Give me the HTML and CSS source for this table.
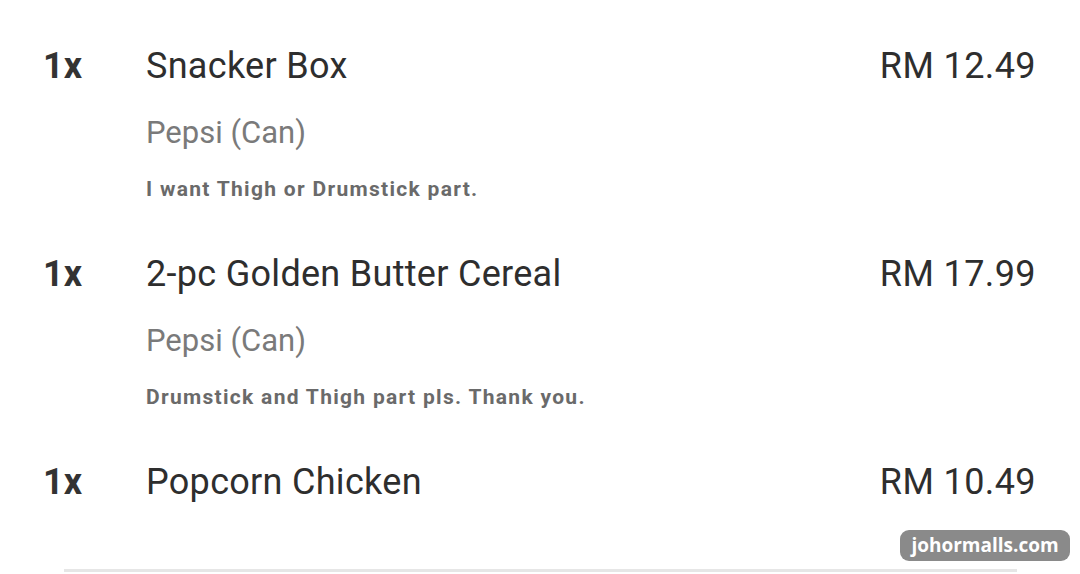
FILE: index.html
```html
<!DOCTYPE html>
<html>
<head>
<meta charset="utf-8">
<link rel="stylesheet" href="styles.css">
</head>
<body>
<div class="order">
  <div class="items">
    <div class="item">
      <div class="qty">1x</div>
      <div class="details">
        <div class="title">Snacker Box</div>
        <div class="option">Pepsi (Can)</div>
        <div class="note">I want Thigh or Drumstick part.</div>
      </div>
      <div class="price">RM 12.49</div>
    </div>
    <div class="item">
      <div class="qty">1x</div>
      <div class="details">
        <div class="title">2-pc Golden Butter Cereal</div>
        <div class="option">Pepsi (Can)</div>
        <div class="note">Drumstick and Thigh part pls. Thank you.</div>
      </div>
      <div class="price">RM 17.99</div>
    </div>
    <div class="item">
      <div class="qty">1x</div>
      <div class="details">
        <div class="title">Popcorn Chicken</div>
      </div>
      <div class="price">RM 10.49</div>
    </div>
  </div>
  <div class="divider"></div>
</div>
<div class="watermark">johormalls.com</div>
</body>
</html>
```
FILE: styles.css
```css
html, body {
  margin: 0;
  padding: 0;
  background: #ffffff;
}
body {
  width: 1080px;
  height: 574px;
  overflow: hidden;
  font-family: Roboto, "Liberation Sans", sans-serif;
  position: relative;
}
.order {
  padding: 44px 44px 0 43px;
  display: flex;
  flex-direction: column;
}
.items {
  display: flex;
  flex-direction: column;
  gap: 51px;
}
.item {
  display: flex;
  align-items: flex-start;
}
.qty {
  width: 103px;
  flex: none;
  font-size: 36px;
  line-height: 44px;
  font-weight: 700;
  color: #333333;
}
.details {
  flex: 1;
  display: flex;
  flex-direction: column;
}
.title {
  font-size: 36px;
  line-height: 44px;
  letter-spacing: 0.3px;
  color: #2e2e2e;
}
.option {
  margin-top: 27px;
  font-size: 31px;
  line-height: 36px;
  color: #7a7a7a;
}
.note {
  margin-top: 26px;
  font-size: 21px;
  line-height: 24px;
  letter-spacing: 1.3px;
  font-weight: 700;
  color: #6a6a6a;
}
.price {
  font-size: 36px;
  line-height: 44px;
  letter-spacing: 0.4px;
  color: #2e2e2e;
}
.divider {
  margin: 65px 19px 0 21px;
  height: 3px;
  background: #e6e6e6;
}
.watermark {
  position: absolute;
  left: 900px;
  top: 530px;
  width: 170px;
  height: 31px;
  border-radius: 9px;
  background: #8a8a8a;
  color: #ffffff;
  font-family: "Open Sans", Roboto, sans-serif;
  font-weight: 700;
  font-size: 19px;
  line-height: 31px;
  text-align: center;
}
```
